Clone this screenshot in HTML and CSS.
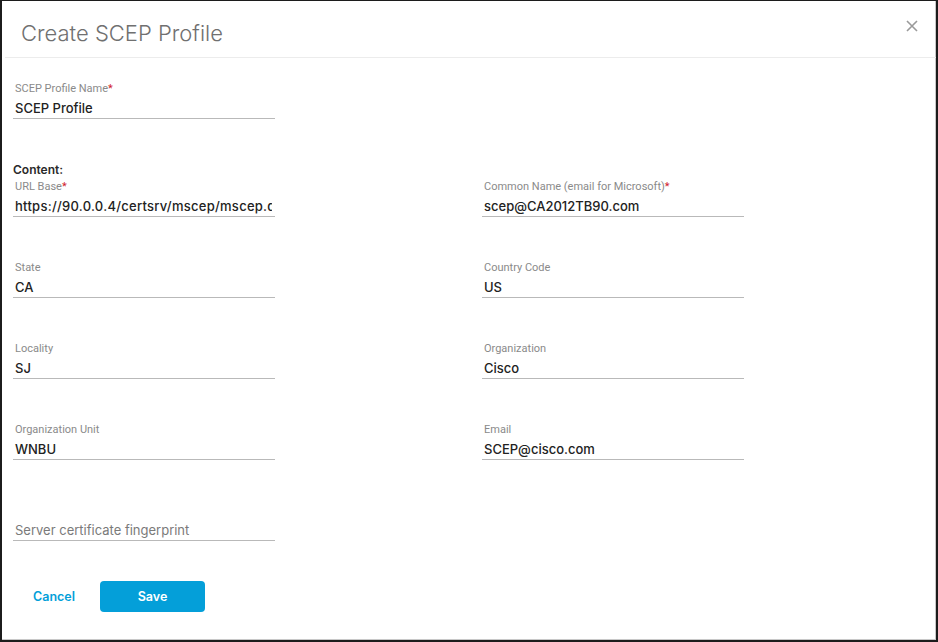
FILE: index.html
```html
<!DOCTYPE html>
<html lang="en">
<head>
<meta charset="utf-8">
<title>Create SCEP Profile</title>
<link rel="stylesheet" href="styles.css">
</head>
<body>
<div class="modal">
  <header class="modal-header">
    <h1 class="modal-title">Create SCEP Profile</h1>
    <button class="close" aria-label="Close">
      <svg width="12" height="12" viewBox="0 0 12 12"><path d="M1 1L11 11M11 1L1 11" stroke="#9a9a9a" stroke-width="1.6" fill="none"/></svg>
    </button>
  </header>
  <main class="modal-body">
    <div class="field">
      <div class="label">SCEP Profile Name<span class="req">*</span></div>
      <div class="value">SCEP Profile</div>
    </div>

    <div class="section-title">Content:</div>

    <div class="grid">
      <div class="field">
        <div class="label">URL Base<span class="req">*</span></div>
        <div class="value url">https://90.0.0.4/certsrv/mscep/mscep.dll</div>
      </div>
      <div class="field">
        <div class="label">Common Name (email for Microsoft)<span class="req">*</span></div>
        <div class="value">scep@CA2012TB90.com</div>
      </div>
      <div class="field">
        <div class="label">State</div>
        <div class="value">CA</div>
      </div>
      <div class="field">
        <div class="label">Country Code</div>
        <div class="value">US</div>
      </div>
      <div class="field">
        <div class="label">Locality</div>
        <div class="value">SJ</div>
      </div>
      <div class="field">
        <div class="label">Organization</div>
        <div class="value">Cisco</div>
      </div>
      <div class="field">
        <div class="label">Organization Unit</div>
        <div class="value">WNBU</div>
      </div>
      <div class="field">
        <div class="label">Email</div>
        <div class="value">SCEP@cisco.com</div>
      </div>
      <div class="field">
        <div class="label"></div>
        <div class="value placeholder">Server certificate fingerprint</div>
      </div>
    </div>

    <div class="actions">
      <button class="btn-link">Cancel</button>
      <button class="btn-primary">Save</button>
    </div>
  </main>
</div>
</body>
</html>
```

FILE: styles.css
```css
html, body {
  margin: 0;
  padding: 0;
  background: #fff;
}
body {
  font-family: Roboto, "Liberation Sans", Arial, sans-serif;
  color: #222;
}
.modal {
  box-sizing: border-box;
  width: 938px;
  height: 642px;
  border: 2px solid #1c1c1c;
  border-top-width: 1px;
  box-shadow: inset -1px -1px 0 #c8c8c8;
  background: #fff;
}
.modal-header {
  height: 56px;
  border-bottom: 1px solid #ececec;
  margin-left: 3px;
  display: flex;
  align-items: flex-start;
  justify-content: space-between;
}
.modal-title {
  margin: 0;
  padding: 18px 0 0 16px;
  font-family: Inter, Roboto, sans-serif;
  font-size: 22px;
  line-height: 28px;
  font-weight: 300;
  color: #707070;
}
.close {
  border: 0;
  background: transparent;
  padding: 0;
  margin: 19px 18px 0 0;
  width: 12px;
  height: 12px;
  display: flex;
  cursor: pointer;
}
.modal-body {
  padding: 24px 0 0 11px;
}
.field {
  box-sizing: border-box;
  width: 262px;
  border-bottom: 1px solid #b9b9b9;
  padding-right: 3px;
}
.label {
  font-size: 11px;
  line-height: 14px;
  height: 14px;
  color: #8a8a8a;
  padding-left: 2px;
  margin-bottom: 2px;
}
.req {
  color: #d0202c;
}
.value {
  font-family: Inter, Roboto, sans-serif;
  font-size: 13px;
  line-height: 20px;
  font-weight: 500;
  color: #222;
  padding-left: 2px;
  white-space: nowrap;
  overflow: hidden;
}
.value.url {
  letter-spacing: 0.27px;
}
.value.placeholder {
  font-weight: 400;
  color: #7a7a7a;
}
.section-title {
  margin-top: 44px;
  font-family: Inter, Roboto, sans-serif;
  font-size: 12px;
  line-height: 14px;
  font-weight: 600;
  color: #2a2a2a;
  margin-bottom: 3px;
}
.grid {
  display: grid;
  grid-template-columns: 262px 262px;
  column-gap: 207px;
  row-gap: 44px;
}
.actions {
  display: flex;
  align-items: center;
  gap: 5px;
  margin-top: 40px;
}
.btn-link {
  border: 0;
  background: transparent;
  font-family: Inter, Roboto, sans-serif;
  font-size: 12.5px;
  font-weight: 600;
  color: #049fd9;
  padding: 0 20px;
  height: 31px;
  cursor: pointer;
}
.btn-primary {
  border: 0;
  border-radius: 4px;
  background: #049fd9;
  color: #fff;
  font-family: Inter, Roboto, sans-serif;
  font-size: 12.5px;
  font-weight: 600;
  width: 105px;
  height: 31px;
  cursor: pointer;
}
```
